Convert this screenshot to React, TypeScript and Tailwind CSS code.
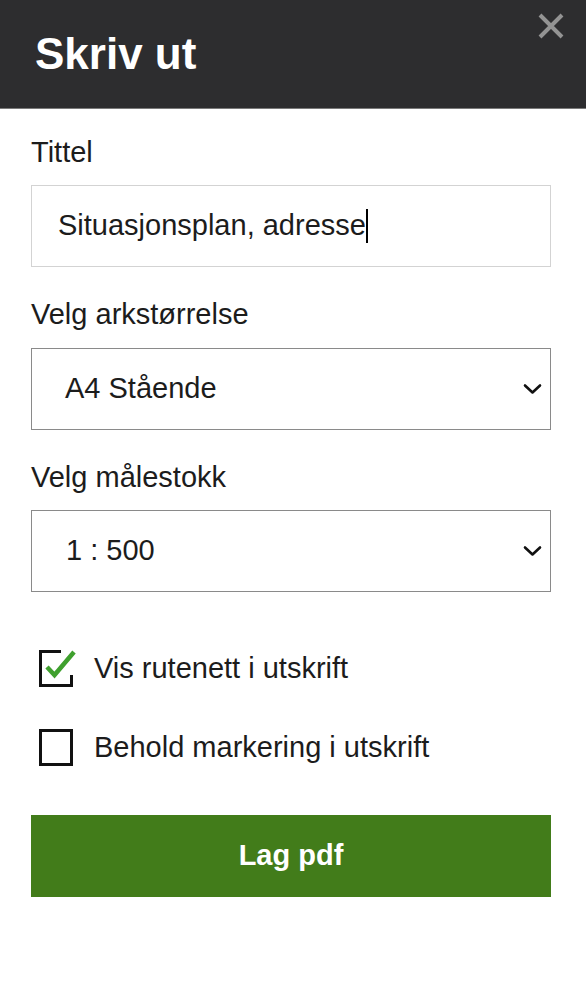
import React, { useState } from 'react';

const font = { fontFamily: '"Liberation Sans", Arial, sans-serif' };

const Chevron = () => (
  <svg className="pointer-events-none absolute right-[8px] top-1/2 -translate-y-1/2" width="19" height="11" viewBox="0 0 19 11">
    <path d="M2 2 L9.5 9 L17 2" fill="none" stroke="#111" strokeWidth="2.6" strokeLinecap="round" strokeLinejoin="round" />
  </svg>
);

const CheckBox = ({ checked }: { checked: boolean }) => (
  <svg width="40" height="40" viewBox="0 0 40 40" className="shrink-0">
    {checked ? (
      <>
        <path d="M23 3.5 H2.5 V37.5 H33.5 V27" fill="none" stroke="#111" strokeWidth="3" />
        <path d="M9 19 L16.5 27 L36 4" fill="none" stroke="#ffffff" strokeWidth="9" />
        <path d="M9 19 L16.5 27 L36 4" fill="none" stroke="#3fa02e" strokeWidth="4.5" />
      </>
    ) : (
      <rect x="2.5" y="3.5" width="31" height="34" fill="none" stroke="#111" strokeWidth="3" />
    )}
  </svg>
);

const App = () => {
  const [title, setTitle] = useState('Situasjonsplan, adresse');
  const [grid, setGrid] = useState(true);
  const [keep, setKeep] = useState(false);

  return (
    <div className="w-[586px] h-[988px] bg-white text-[#1c1c1c]" style={font}>
      <div className="h-[109px] bg-[#2d2d2f] border-b border-[#7a7a7a] flex justify-between items-start">
        <h1 className="pl-[35px] h-[108px] flex items-center text-[44px] font-bold text-white">Skriv ut</h1>
        <button className="mt-[13px] mr-[22px]">
          <svg width="26" height="26" viewBox="0 0 26 26">
            <path d="M2 2 L24 24 M24 2 L2 24" stroke="#939393" strokeWidth="4" />
          </svg>
        </button>
      </div>

      <div className="pl-[31px] pr-[35px] pt-[26px]">
        <label className="block text-[29px] leading-[34px]">Tittel</label>
        <div className="mt-[16px] h-[82px] border border-[#d3d3d3] flex items-center pl-[26px] text-[29px]">
          <span>{title}</span>
          <span className="inline-block w-[2px] h-[34px] bg-black" />
        </div>

        <label className="block mt-[30px] text-[29px] leading-[34px]">Velg arkstørrelse</label>
        <div className="relative mt-[17px] h-[82px] border border-[#8a8a8a] flex items-center pl-[33px] text-[29px]">
          A4 Stående
          <Chevron />
        </div>

        <label className="block mt-[30px] text-[29px] leading-[34px]">Velg målestokk</label>
        <div className="relative mt-[16px] h-[82px] border border-[#8a8a8a] flex items-center pl-[34px] text-[29px]">
          1 : 500
          <Chevron />
        </div>

        <div className="mt-[56px] flex flex-col gap-[39px] pl-[7px]">
          <button onClick={() => setGrid(!grid)} className="flex items-center gap-[16px] text-[29px] leading-[40px]">
            <CheckBox checked={grid} />
            <span>Vis rutenett i utskrift</span>
          </button>
          <button onClick={() => setKeep(!keep)} className="flex items-center gap-[16px] text-[29px] leading-[40px]">
            <CheckBox checked={keep} />
            <span>Behold markering i utskrift</span>
          </button>
        </div>

        <button
          onClick={() => setTitle(title)}
          className="mt-[48px] w-full h-[82px] bg-[#427c1a] text-white text-[29px] font-bold flex items-center justify-center"
        >
          Lag pdf
        </button>
      </div>
    </div>
  );
};

export default App;
